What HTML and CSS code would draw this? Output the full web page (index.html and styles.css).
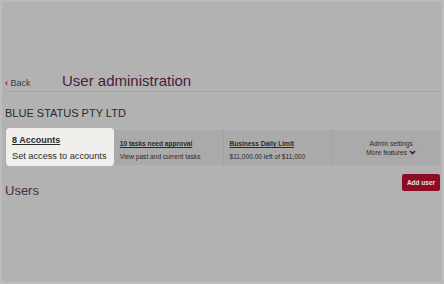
FILE: index.html
```html
<!DOCTYPE html>
<html lang="en">
<head>
    <meta charset="UTF-8">
    <meta name="viewport" content="width=device-width, initial-scale=1.0">
    <title>User administration</title>
    <link rel="stylesheet" href="styles.css">
</head>
<body>
    <div class="page">
        <div class="header">
            <a class="back" href="#"><span class="chev">&lsaquo;</span> Back</a>
            <h1>User administration</h1>
        </div>
        <h2 class="company">BLUE STATUS PTY LTD</h2>

        <div class="tabs">
            <div class="tab tab-active">
                <a href="#" class="tab-title">8 Accounts</a>
                <p class="tab-sub">Set access to accounts</p>
            </div>
            <div class="tab">
                <a href="#" class="tab-title small">10 tasks need approval</a>
                <p class="tab-sub small">View past and current tasks</p>
            </div>
            <div class="tab">
                <a href="#" class="tab-title small">Business Daily Limit</a>
                <p class="tab-sub small">$11,000.00 left of $11,000</p>
            </div>
            <div class="tab tab-menu">
                <div class="menu">
                    <span>Admin settings</span>
                    <span class="more">More features
                        <svg width="7" height="5" viewBox="0 0 8 6"><path d="M1 1.2 L4 4.2 L7 1.2" fill="none" stroke="#4a1a3d" stroke-width="2"/></svg>
                    </span>
                </div>
            </div>
        </div>

        <div class="users-head">
            <h3>Users</h3>
            <button class="add">Add user</button>
        </div>
    </div>
</body>
</html>
```

FILE: styles.css
```css
* {
    box-sizing: border-box;
}
body {
    margin: 0;
    font-family: "Liberation Sans", Arial, sans-serif;
    background: #bcbcbc;
}
.page {
    margin: 2px;
    height: 280px;
    background: #b2b2b2;
    padding: 0 2px 0 3px;
    overflow: hidden;
}
.header {
    display: flex;
    align-items: baseline;
    padding-top: 70px;
    padding-bottom: 2px;
    border-bottom: 1px solid #a6a6a6;
}
.back {
    font-size: 9px;
    color: #3a3a3a;
    text-decoration: none;
    width: 57px;
}
.chev {
    color: #8c0e24;
    font-weight: bold;
}
h1 {
    margin: 0;
    font-size: 15px;
    font-weight: normal;
    color: #4a1a3d;
}
.company {
    margin: 15px 0 0;
    font-size: 11px;
    font-weight: normal;
    color: #2b2b2b;
}
.tabs {
    display: grid;
    grid-template-columns: repeat(4, 1fr);
    margin-top: 11px;
    height: 35px;
    background: #aaaaaa;
}
.tab {
    border-left: 1px solid #a2a2a2;
    padding: 8px 6px 0;
    white-space: nowrap;
    overflow: hidden;
}
.tab:first-child {
    border-left: none;
}
.tab-active {
    background: #f0efec;
    border-radius: 4px;
    margin: -2px 0 -1px 1px;
    height: 38px;
    padding: 7px 0 0 6px;
}
.tab-active + .tab {
    border-left: none;
}
.tab-title {
    display: block;
    font-size: 9px;
    font-weight: bold;
    color: #2a2a2a;
}
.tab-sub {
    margin: 6px 0 0;
    font-size: 9.2px;
    color: #2a2a2a;
}
.tab-title.small {
    font-size: 6.6px;
    margin-top: 2px;
}
.tab-sub.small {
    font-size: 6.6px;
    margin-top: 6px;
}
.tab-menu {
    display: flex;
    justify-content: flex-end;
    padding: 8px 22px 0 0;
}
.menu {
    display: flex;
    flex-direction: column;
    align-items: center;
    border: 1px solid #a6a6a6;
    border-top: none;
    border-radius: 2px;
    height: 20px;
    padding: 1px 1px 0;
    font-size: 6.6px;
    color: #2a2a2a;
    line-height: 9px;
}
.more {
    display: flex;
    align-items: center;
    gap: 2px;
}
.users-head {
    display: flex;
    justify-content: space-between;
    align-items: flex-start;
    margin-top: 9px;
}
h3 {
    margin: 9px 0 0;
    font-size: 13px;
    font-weight: normal;
    color: #4a2a47;
}
.add {
    font-family: inherit;
    font-size: 6.5px;
    font-weight: bold;
    color: #e8e0e2;
    background: #8e0b26;
    border: none;
    border-radius: 2px;
    width: 38px;
    height: 17px;
    padding: 0;
}
```
